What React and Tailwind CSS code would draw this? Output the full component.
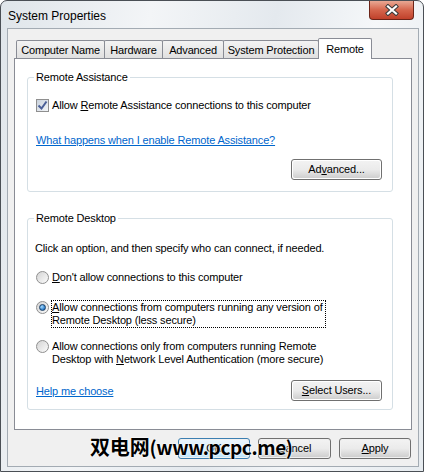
import React from 'react';

const font = { fontFamily: '"Liberation Sans", Arial, sans-serif' };

function Tab({ label, width, selected, first }) {
    if (selected) {
        return (
            <div className={`${width} -ml-px relative z-10 -mb-px h-[21px] border border-b-0 border-[#898c95] bg-white flex items-center justify-center rounded-t-[2px]`}>
                {label}
            </div>
        );
    }
    return (
        <div className={`${width} ${first ? '' : '-ml-px'} h-[18px] border border-b-0 border-[#898c95] bg-linear-to-b from-[#f3f3f3] to-[#e0e0e0] flex items-center justify-center pt-[2px] rounded-t-[2px]`}>
            {label}
        </div>
    );
}

function Button({ children, className = '', primary }) {
    return (
        <div
            className={`h-[21px] rounded-[3px] border ${primary ? 'border-[#3c7fb1]' : 'border-[#707070]'} p-px ${className}`}
        >
            <div
                className={`h-full w-full rounded-[2px] flex items-center justify-center ${
                    primary
                        ? 'bg-linear-to-b from-[#eaf6fd] via-[#d9f0fc] to-[#bee6fd]'
                        : 'bg-linear-to-b from-[#f2f2f2] via-[#ebebeb] to-[#cfcfcf]'
                }`}
            >
                {children}
            </div>
        </div>
    );
}

function Radio({ checked }) {
    return (
        <span className="flex h-[13px] w-[13px] shrink-0 items-center justify-center rounded-full border border-[#8f8f8f] bg-linear-to-br from-[#d4d4d4] to-[#fbfbfb]">
            {checked && (
                <span className="h-[7px] w-[7px] rounded-full border border-[#1b3f66] bg-[radial-gradient(circle_at_35%_35%,#a8dcff,#1f73c4_75%)]" />
            )}
        </span>
    );
}

function Checkbox() {
    return (
        <span className="flex h-[13px] w-[13px] shrink-0 items-center justify-center border border-[#8f8f8f] bg-linear-to-br from-[#c9d2dd] to-[#f4f6f8]">
            <svg width="11" height="11" viewBox="0 0 11 11">
                <path d="M1.5 5.5 L4.5 8.5 L9.5 1.5" fill="none" stroke="#4a5f97" strokeWidth="2" />
            </svg>
        </span>
    );
}

function CloseButton() {
    return (
        <div className="self-start ml-auto mr-[5px] h-[19px] w-[45px] rounded-b-[4px] border border-t-0 border-[#6b2418] bg-linear-to-b from-[#e8a894] via-[#d5654c] to-[#c0402a] flex items-center justify-center">
            <svg width="16" height="12" viewBox="0 0 16 12">
                <path d="M4 2.5 L12 9.5 M12 2.5 L4 9.5" stroke="#3a3a3a" strokeWidth="4.2" strokeLinecap="square" />
                <path d="M4 2.5 L12 9.5 M12 2.5 L4 9.5" stroke="#ffffff" strokeWidth="2.2" strokeLinecap="square" />
            </svg>
        </div>
    );
}

export default function App() {
    return (
        <div className="w-[426px] h-[474px] bg-white text-[11px] leading-[13px] tracking-[-0.15px] text-black" style={font}>
            <div className="relative w-[424px] h-[472px] rounded-t-[7px] border border-[#4a4f55] bg-[linear-gradient(100deg,#dfe5ea_0%,#f3f5f7_30%,#e4e9ee_55%,#f5f7f9_75%,#e6ebef_100%)] pl-[6px] pr-[4px] pb-[4px] flex flex-col">
                {/* Title bar */}
                <div className="h-[27px] flex items-center">
                    <span className="pl-[1px] text-[12px] leading-[14px] tracking-normal pt-[2px]">System Properties</span>
                    <CloseButton />
                </div>

                {/* Client area */}
                <div className="flex-1 border border-[#a3abb3] bg-[#f0f0f0] flex flex-col">
                    {/* Tabs */}
                    <div className="flex items-end pl-[8px] pt-[8px] h-[29px]">
                        <Tab label="Computer Name" width="w-[89px]" first />
                        <Tab label="Hardware" width="w-[59px]" />
                        <Tab label="Advanced" width="w-[62px]" />
                        <Tab label="System Protection" width="w-[96px]" />
                        <Tab label="Remote" width="w-[54px]" selected />
                    </div>

                    {/* Panel */}
                    <div className="ml-[6px] w-[398px] h-[372px] border border-[#898c95] bg-white pt-[12px] pl-[12px]">
                        <fieldset className="w-[366px] rounded-[3px] border border-[#d5dfe5] pl-[8px] pr-[10px] pb-[11px]">
                            <legend className="-ml-[2px] px-[2px] leading-[13px]">Remote Assistance</legend>
                            <div className="mt-[15px] flex items-start gap-[3px]">
                                <Checkbox />
                                <span>
                                    Allow <u>R</u>emote Assistance connections to this computer
                                </span>
                            </div>
                            <div className="mt-[22px]">
                                <span className="text-[#0066cc] underline">What happens when I enable Remote Assistance?</span>
                            </div>
                            <div className="mt-[12px] flex justify-end">
                                <Button className="w-[91px]">
                                    Ad<u>v</u>anced...
                                </Button>
                            </div>
                        </fieldset>

                        <fieldset className="mt-[20px] w-[366px] rounded-[3px] border border-[#d5dfe5] pl-[8px] pr-[10px] pb-[8px]">
                            <legend className="-ml-[2px] px-[2px] leading-[13px]">Remote Desktop</legend>
                            <div className="mt-[17px] -ml-px">Click an option, and then specify who can connect, if needed.</div>
                            <div className="mt-[16px] flex items-start gap-[3px]">
                                <Radio />
                                <span>
                                    <u>D</u>on't allow connections to this computer
                                </span>
                            </div>
                            <div className="mt-[16px] flex items-start gap-[2px]">
                                <span className="pt-px">
                                    <Radio checked />
                                </span>
                                <span className="border border-dotted border-black pr-[2px]">
                                    <u>A</u>llow connections from computers running any version of
                                    <br />
                                    Remote Desktop (less secure)
                                </span>
                            </div>
                            <div className="mt-[12px] flex items-start gap-[3px]">
                                <Radio />
                                <span>
                                    Allow connections only from computers running Remote
                                    <br />
                                    Desktop with <u>N</u>etwork Level Authentication (more secure)
                                </span>
                            </div>
                            <div className="mt-[14px] flex items-center justify-between">
                                <span className="text-[#0066cc] underline pt-[2px]">Help me choose</span>
                                <Button className="w-[91px]">
                                    <u>S</u>elect Users...
                                </Button>
                            </div>
                        </fieldset>
                    </div>

                    {/* Dialog buttons */}
                    <div className="mt-[8px] flex justify-end gap-[8px] pr-[7px]">
                        <Button className="w-[72px]" primary>
                            OK
                        </Button>
                        <Button className="w-[73px]">Cancel</Button>
                        <Button className="w-[72px]">
                            <u>A</u>pply
                        </Button>
                    </div>
                </div>

                {/* Watermark */}
                <div
                    className="absolute left-[89px] top-[434px] text-[20px] leading-[24px] font-bold text-black [text-shadow:0_0_2px_#fff,0_0_2px_#fff,0_0_1px_#fff]"
                    style={{ fontFamily: '"Noto Sans CJK SC", "Liberation Sans", sans-serif' }}
                >
                    双电网<span className="tracking-[-0.4px] text-[19px]">(www.pcpc.me)</span>
                </div>
            </div>
        </div>
    );
}
